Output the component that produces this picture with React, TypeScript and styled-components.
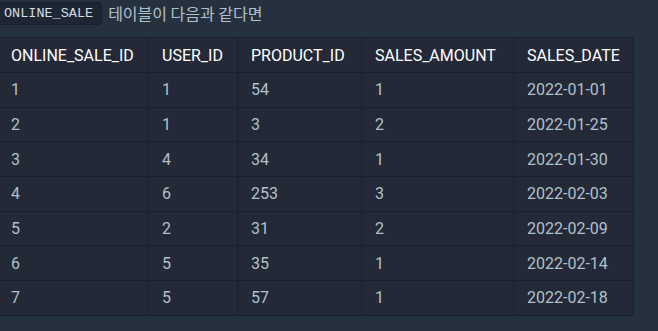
import styled, { createGlobalStyle } from 'styled-components';

type SaleRow = {
  id: number;
  userId: number;
  productId: number;
  amount: number;
  date: string;
};

const rows: SaleRow[] = [
  { id: 1, userId: 1, productId: 54, amount: 1, date: '2022-01-01' },
  { id: 2, userId: 1, productId: 3, amount: 2, date: '2022-01-25' },
  { id: 3, userId: 4, productId: 34, amount: 1, date: '2022-01-30' },
  { id: 4, userId: 6, productId: 253, amount: 3, date: '2022-02-03' },
  { id: 5, userId: 2, productId: 31, amount: 2, date: '2022-02-09' },
  { id: 6, userId: 5, productId: 35, amount: 1, date: '2022-02-14' },
  { id: 7, userId: 5, productId: 57, amount: 1, date: '2022-02-18' },
];

const columns = [
  { label: 'ONLINE_SALE_ID', width: 151 },
  { label: 'USER_ID', width: 89 },
  { label: 'PRODUCT_ID', width: 124 },
  { label: 'SALES_AMOUNT', width: 152 },
  { label: 'SALES_DATE', width: 120 },
];

const GlobalStyle = createGlobalStyle`
  html, body {
    margin: 0;
    padding: 0;
    background: #263140;
  }
  body {
    font-family: Roboto, 'Liberation Sans', Arial, sans-serif;
    overflow: hidden;
  }
`;

const Page = styled.div`
  width: 658px;
  height: 331px;
  background: #263140;
  color: #b2c0cc;
`;

const Intro = styled.p`
  display: flex;
  align-items: center;
  gap: 6px;
  margin: 0;
  padding-top: 2px;
  height: 22px;
`;

const Code = styled.code`
  font-family: 'Liberation Mono', 'DejaVu Sans Mono', monospace;
  font-size: 13.5px;
  line-height: 21px;
  padding: 0 8px 0 4px;
  color: #d4dce4;
  background: #1e2633;
  border: 1px solid #1a202b;
  border-left: none;
  border-radius: 0 4px 4px 0;
`;

const Lead = styled.span`
  font-family: 'Noto Sans CJK KR', 'Noto Sans', sans-serif;
  font-size: 16px;
  color: #b2c0cc;
`;

const Table = styled.table`
  width: 637px;
  margin: 13px 0 0 -3px;
  border-collapse: collapse;
  table-layout: fixed;
  background: #232937;
  border: 1px solid #1b212c;
  font-size: 16px;
`;

const Th = styled.th<{ $width: number }>`
  width: ${(p) => p.$width}px;
  box-sizing: border-box;
  height: 35px;
  padding: 0 13px;
  text-align: left;
  font-weight: normal;
  color: #ffffff;
  border: 1px solid #1b212c;
  white-space: nowrap;
`;

const Td = styled.td`
  height: 34.7px;
  box-sizing: border-box;
  padding: 0 13px;
  color: #b2c0cc;
  border: 1px solid #1b212c;
  white-space: nowrap;
`;

const App = () => {
  return (
    <Page>
      <GlobalStyle />
      <Intro>
        <Code>ONLINE_SALE</Code>
        <Lead>테이블이 다음과 같다면</Lead>
      </Intro>
      <Table>
        <thead>
          <tr>
            {columns.map((c) => (
              <Th key={c.label} $width={c.width}>
                {c.label}
              </Th>
            ))}
          </tr>
        </thead>
        <tbody>
          {rows.map((r) => (
            <tr key={r.id}>
              <Td>{r.id}</Td>
              <Td>{r.userId}</Td>
              <Td>{r.productId}</Td>
              <Td>{r.amount}</Td>
              <Td>{r.date}</Td>
            </tr>
          ))}
        </tbody>
      </Table>
    </Page>
  );
};

export default App;
